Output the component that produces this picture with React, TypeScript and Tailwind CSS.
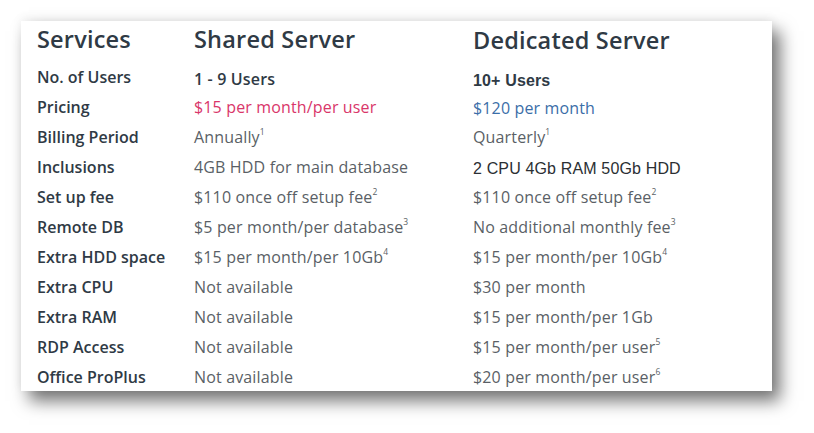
import React from "react";

type Cell = { text: string; sup?: string; className?: string };

const rows: { label: string; shared: Cell; dedicated: Cell }[] = [
  {
    label: "No. of Users",
    shared: { text: "1 - 9 Users", className: "font-semibold text-[#2f3a45] translate-y-[2px]" },
    dedicated: {
      text: "10+ Users",
      className: "text-[16px] font-bold text-[#2f3a45] font-['Liberation_Sans',Arial,sans-serif] translate-y-[4px]",
    },
  },
  {
    label: "Pricing",
    shared: { text: "$15 per month/per user", className: "text-[#d9366a]" },
    dedicated: { text: "$120 per month", className: "text-[#3b6ea8] translate-y-[1px]" },
  },
  {
    label: "Billing Period",
    shared: { text: "Annually", sup: "1" },
    dedicated: { text: "Quarterly", sup: "1" },
  },
  {
    label: "Inclusions",
    shared: { text: "4GB HDD for main database" },
    dedicated: {
      text: "2 CPU 4Gb RAM 50Gb HDD",
      className: "text-[16px] text-[#2b2f33] font-['Liberation_Sans',Arial,sans-serif] translate-y-[2px]",
    },
  },
  {
    label: "Set up fee",
    shared: { text: "$110 once off setup fee", sup: "2" },
    dedicated: { text: "$110 once off setup fee", sup: "2" },
  },
  {
    label: "Remote DB",
    shared: { text: "$5 per month/per database", sup: "3" },
    dedicated: { text: "No additional monthly fee", sup: "3" },
  },
  {
    label: "Extra HDD space",
    shared: { text: "$15 per month/per 10Gb", sup: "4" },
    dedicated: { text: "$15 per month/per 10Gb", sup: "4" },
  },
  {
    label: "Extra CPU",
    shared: { text: "Not available" },
    dedicated: { text: "$30 per month" },
  },
  {
    label: "Extra RAM",
    shared: { text: "Not available" },
    dedicated: { text: "$15 per month/per 1Gb" },
  },
  {
    label: "RDP Access",
    shared: { text: "Not available" },
    dedicated: { text: "$15 per month/per user", sup: "5" },
  },
  {
    label: "Office ProPlus",
    shared: { text: "Not available" },
    dedicated: { text: "$20 per month/per user", sup: "6" },
  },
];

const Value = ({ cell }: { cell: Cell }) => (
  <div className="flex items-center">
    <span className={`text-[16px] tracking-[0.15px] whitespace-nowrap ${cell.className ?? "text-[#5a5f66]"}`}>
      {cell.text}
      {cell.sup && <sup className="text-[8.5px] top-[-0.95em]">{cell.sup}</sup>}
    </span>
  </div>
);

export default function App() {
  return (
    <div className="w-[814px] h-[433px] bg-white pt-[21px] pl-[21px] font-['Open_Sans',sans-serif]">
      <div className="w-[751px] h-[370px] bg-white overflow-hidden shadow-[8px_10px_16px_rgba(0,0,0,0.55),0_-3px_10px_rgba(0,0,0,0.06)] pl-[16px]">
        <div className="grid grid-cols-[157px_279px_1fr] h-[41px] items-center pb-[3px] text-[23.5px] font-semibold tracking-[0.2px] text-[#2f3a45]">
          <div>Services</div>
          <div>Shared Server</div>
          <div className="translate-y-[1px]">Dedicated Server</div>
        </div>
        {rows.map((row) => (
          <div key={row.label} className="grid grid-cols-[157px_279px_1fr] h-[30px] items-center">
            <div className="text-[16px] font-semibold text-[#2f3a45] whitespace-nowrap">{row.label}</div>
            <Value cell={row.shared} />
            <Value cell={row.dedicated} />
          </div>
        ))}
      </div>
    </div>
  );
}
